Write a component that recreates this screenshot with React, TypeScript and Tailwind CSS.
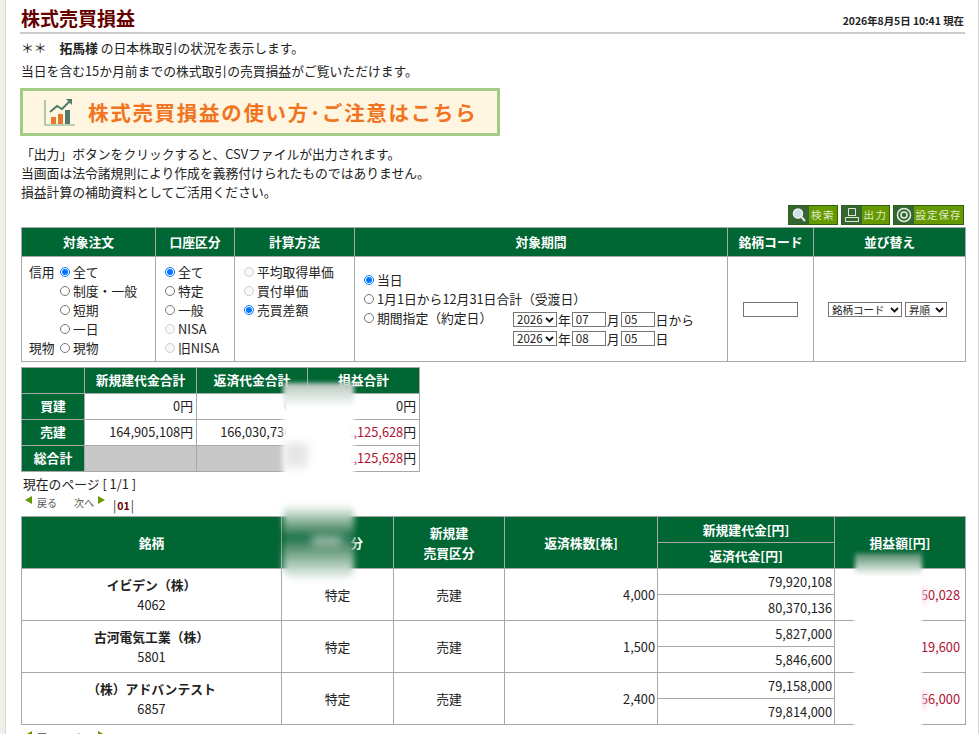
import React from "react";

const FONT = '"Noto Sans CJK JP", "Noto Sans", sans-serif';
const th = "border border-[#a8a8a8] bg-[#006633] text-white font-bold text-center p-0";
const td = "border border-[#a8a8a8] bg-white p-0";
const sumTh = `${th} pb-[2px]`;
const sumTd = `${td} text-right pr-[3px] pb-[2px]`;

function R({ on, off, label }: { on?: boolean; off?: boolean; label: React.ReactNode }) {
  return (
    <label className="flex items-center h-[19px] whitespace-nowrap">
      <input type="radio" readOnly checked={!!on} disabled={off} className="w-[10px] h-[10px] m-0 mr-[3px] shrink-0" />
      <span>{label}</span>
    </label>
  );
}

function Sel({ w, label, small }: { w: string; label: string; small?: boolean }) {
  return (
    <span className={`relative block shrink-0 ${w}`}>
      <select className={`block appearance-none border border-[#767676] w-full h-[15px] pl-[3px] pr-0 leading-[13px] ${small ? "text-[10.5px]" : "text-[11.5px]"}`}>
        <option>{label}</option>
      </select>
      <svg width="9" height="6" viewBox="0 0 9 6" className="absolute right-[3px] top-[5px] pointer-events-none">
        <path d="M1 1L4.5 4.5L8 1" fill="none" stroke="#111" strokeWidth="1.8" />
      </svg>
    </span>
  );
}

function Num({ v, w }: { v: string; w: string }) {
  return <input readOnly value={v} className={`border border-[#767676] h-[15px] ml-[1px] pl-[3px] text-[11.5px] leading-[13px] shrink-0 ${w}`} />;
}

function Btn({ w, icon, label, track }: { w: string; icon: React.ReactNode; label: string; track: string }) {
  return (
    <div className={`flex h-[20px] border border-[#2f5f12] bg-[#669900] ${w}`}>
      <div className="flex items-center justify-center bg-[#336633] h-full shrink-0 w-[20px]">{icon}</div>
      <div className={`flex-1 text-center text-[10.5px] leading-[18px] text-[#dfeccb] whitespace-nowrap ${track}`}>{label}</div>
    </div>
  );
}

function Nav() {
  return (
    <div className="flex items-start h-[22px] text-[10px] text-[#555] pl-[4px] whitespace-nowrap">
      <svg width="7" height="8" viewBox="0 0 7 8" className="mt-[2px] mr-[5px]"><path d="M7 0V8L0 4Z" fill="#669900" /></svg>
      <span className="leading-[16px] mt-[1px]">戻る</span>
      <span className="leading-[16px] ml-[17px] mt-[1px]">次へ</span>
      <svg width="7" height="8" viewBox="0 0 7 8" className="mt-[2px] ml-[4px]"><path d="M0 0V8L7 4Z" fill="#669900" /></svg>
      <span className="ml-[8px] mt-[3px] text-[12px] leading-[16px] text-[#333]">|<b className="text-[10.5px] text-[#660000] mx-[1px]">01</b>|</span>
    </div>
  );
}

function StockRow({ name, code, qty, a, b, pl }: { name: string; code: string; qty: string; a: string; b: string; pl: string }) {
  return (
    <>
      <tr className="h-[26px]">
        <td rowSpan={2} className={`${td} text-center`}>
          <div className="font-bold leading-[19px]">{name}</div>
          <div className="leading-[19px] mt-[1px]">{code}</div>
        </td>
        <td rowSpan={2} className={`${td} text-center`}>特定</td>
        <td rowSpan={2} className={`${td} text-center`}>売建</td>
        <td rowSpan={2} className={`${td} text-right pr-[2px]`}>{qty}</td>
        <td className={`${td} text-right pr-[2px]`}>{a}</td>
        <td rowSpan={2} className={`${td} text-right pr-[5px] text-[#b01030]`}>{pl}</td>
      </tr>
      <tr className="h-[26px]">
        <td className={`${td} text-right pr-[2px]`}>{b}</td>
      </tr>
    </>
  );
}

export default function App() {
  return (
    <div className="relative flex w-[980px] h-[734px] overflow-hidden bg-white text-[#222] text-[12.8px]" style={{ fontFamily: FONT }}>
      <div className="w-[6px] shrink-0 bg-[#f0efe9] border-r border-[#d8d8d2]" />
      <main className="w-[944px] ml-[15px] shrink-0">
        <header className="flex items-end justify-between h-[34px] -ml-px border-b-2 border-[#cccccc] pb-[1px] pl-[1px]">
          <h1 className="text-[19px] leading-[26px] font-bold text-[#660000]">株式売買損益</h1>
          <div className="text-[10.4px] font-bold leading-[14px] text-[#222] mb-[3px] mr-[1px]">2026年8月5日 10:41 現在</div>
        </header>
        <p className="leading-[19px] mt-[4px]">＊＊　<b>拓馬様</b> の日本株取引の状況を表示します。</p>
        <p className="leading-[19px] mt-[4px]">当日を含む15か月前までの株式取引の売買損益がご覧いただけます。</p>

        <div className="flex items-center w-[480px] h-[48px] mt-[8px] -ml-px border-[3px] border-[#a5cc84] bg-[#fff6e1]">
          <svg width="32" height="30" viewBox="0 0 32 30" className="ml-[21px]">
            <path d="M1 3V28H31" fill="none" stroke="#7fa88f" strokeWidth="1.2" />
            <rect x="7" y="20" width="5" height="7" fill="#e8762c" />
            <rect x="14" y="17" width="5" height="10" fill="#e8762c" />
            <rect x="21" y="13" width="5" height="14" fill="#4f7d69" />
            <path d="M6 15L13 9L18 12L26 4" fill="none" stroke="#4f7d69" strokeWidth="2" />
            <path d="M22 2H28V8Z" fill="#4f7d69" />
          </svg>
          <span className="ml-[12px] text-[20.5px] font-bold tracking-[1.7px] text-[#f07522] whitespace-nowrap">株式売買損益の使い方･ご注意はこちら</span>
        </div>

        <div className="mt-[8px] leading-[19px]">
          <p>「出力」ボタンをクリックすると、CSVファイルが出力されます。</p>
          <p>当画面は法令諸規則により作成を義務付けられたものではありません。</p>
          <p>損益計算の補助資料としてご活用ください。</p>
        </div>

        <div className="flex justify-end gap-[3px] mt-[4px] mr-px">
          <Btn w="w-[50px]" track="tracking-[1.6px]" label="検索" icon={
            <svg width="16" height="16" viewBox="0 0 16 16"><circle cx="7" cy="6.5" r="4.5" fill="#cfe0e8" stroke="#f2f2f2" strokeWidth="1.5" /><path d="M10.5 10L14 14" stroke="#e8e8e8" strokeWidth="2" /></svg>
          } />
          <Btn w="w-[49px]" track="tracking-[1.6px]" label="出力" icon={
            <svg width="16" height="16" viewBox="0 0 16 16" fill="none" stroke="#dfe8d8" strokeWidth="1"><path d="M4.5 1.5H11.5V8.5H4.5Z" /><path d="M1.5 10.5H14.5V14.5H1.5Z" /><path d="M4 8.5H12" /></svg>
          } />
          <Btn w="w-[71px]" track="tracking-[1px]" label="設定保存" icon={
            <svg width="16" height="16" viewBox="0 0 16 16" fill="none" stroke="#e8efe0"><circle cx="8" cy="8" r="6.5" strokeWidth="1.5" /><circle cx="8" cy="8" r="3" strokeWidth="1.5" /></svg>
          } />
        </div>

        <table className="table-fixed border-collapse w-[944px] mt-[2px]">
          <colgroup>
            <col className="w-[134px]" /><col className="w-[79px]" /><col className="w-[120px]" /><col className="w-[373px]" /><col className="w-[86px]" /><col className="w-[152px]" />
          </colgroup>
          <thead>
            <tr className="h-[29px]">
              {["対象注文", "口座区分", "計算方法", "対象期間", "銘柄コード", "並び替え"].map((t) => (
                <th key={t} className={th}>{t}</th>
              ))}
            </tr>
          </thead>
          <tbody>
            <tr className="h-[105px]">
              <td className={`${td} align-middle pt-[1px]`}>
                <div className="flex pl-[7px]">
                  <div className="w-[31px] leading-[19px] shrink-0">
                    <div className="h-[76px]">信用</div>
                    <div>現物</div>
                  </div>
                  <div>
                    <R on label="全て" />
                    <R label="制度・一般" />
                    <R label="短期" />
                    <R label="一日" />
                    <R label="現物" />
                  </div>
                </div>
              </td>
              <td className={`${td} align-middle pl-[9px] pt-[1px]`}>
                <R on label="全て" />
                <R label="特定" />
                <R label="一般" />
                <R off label="NISA" />
                <R off label="旧NISA" />
              </td>
              <td className={`${td} align-top pl-[9px] pt-[5px]`}>
                <R off label="平均取得単価" />
                <R off label="買付単価" />
                <R on label="売買差額" />
              </td>
              <td className={`${td} align-middle pl-[9px]`}>
                <R on label="当日" />
                <R label="1月1日から12月31日合計（受渡日）" />
                <div className="flex">
                  <div className="w-[149px] shrink-0"><R label="期間指定（約定日）" /></div>
                  <div className="leading-[19px]">
                    <div className="flex items-center h-[19px] mt-[1px]">
                      <Sel w="w-[44px]" label="2026" />
                      <span className="ml-px">年</span>
                      <Num v="07" w="w-[34px]" />
                      <span className="ml-px">月</span>
                      <Num v="05" w="w-[34px]" />
                      <span className="ml-px">日から</span>
                    </div>
                    <div className="flex items-center h-[19px]">
                      <Sel w="w-[44px]" label="2026" />
                      <span className="ml-px">年</span>
                      <Num v="08" w="w-[34px]" />
                      <span className="ml-px">月</span>
                      <Num v="05" w="w-[34px]" />
                      <span className="ml-px">日</span>
                    </div>
                  </div>
                </div>
              </td>
              <td className={`${td} text-center align-middle`}>
                <input readOnly className="border border-[#767676] w-[55px] h-[15px] block mx-auto" />
              </td>
              <td className={`${td} text-center align-middle pr-[4px]`}>
                <div className="flex justify-center gap-[3px]">
                  <Sel w="w-[74px]" label="銘柄コード" small />
                  <Sel w="w-[42px]" label="昇順" small />
                </div>
              </td>
            </tr>
          </tbody>
        </table>

        <table className="table-fixed border-collapse w-[398px] mt-[5px]">
          <colgroup><col className="w-[63px]" /><col className="w-[112px]" /><col className="w-[111px]" /><col className="w-[112px]" /></colgroup>
          <tbody>
            <tr className="h-[26px]"><th className={sumTh} /><th className={sumTh}>新規建代金合計</th><th className={sumTh}>返済代金合計</th><th className={sumTh}>損益合計</th></tr>
            <tr className="h-[26px]"><th className={sumTh}>買建</th><td className={sumTd}>0円</td><td className={sumTd}>0円</td><td className={sumTd}>0円</td></tr>
            <tr className="h-[26px]"><th className={sumTh}>売建</th><td className={sumTd}>164,905,108円</td><td className={sumTd}>166,030,736円</td><td className={sumTd}><span className="text-[#b01030]">-1,125,628</span>円</td></tr>
            <tr className="h-[26px]"><th className={sumTh}>総合計</th><td className="border border-[#a8a8a8] bg-[#c8c8c8]" /><td className="border border-[#a8a8a8] bg-[#c8c8c8]" /><td className={sumTd}><span className="text-[#b01030]">-1,125,628</span>円</td></tr>
          </tbody>
        </table>

        <p className="pl-[2px] leading-[19px] mt-[2px]">現在のページ [ 1/1 ]</p>
        <div className="mt-[1px]"><Nav /></div>

        <table className="table-fixed border-collapse w-[944px]">
          <colgroup><col className="w-[260px]" /><col className="w-[112px]" /><col className="w-[111px]" /><col className="w-[153px]" /><col className="w-[177px]" /><col className="w-[131px]" /></colgroup>
          <thead>
            <tr className="h-[26px]">
              <th rowSpan={2} className={th}>銘柄</th>
              <th rowSpan={2} className={th}>口座区分</th>
              <th rowSpan={2} className={`${th} leading-[20px]`}>新規建<br />売買区分</th>
              <th rowSpan={2} className={th}>返済株数[株]</th>
              <th className={th}>新規建代金[円]</th>
              <th rowSpan={2} className={th}>損益額[円]</th>
            </tr>
            <tr className="h-[26px]"><th className={th}>返済代金[円]</th></tr>
          </thead>
          <tbody>
            <StockRow name="イビデン（株）" code="4062" qty="4,000" a="79,920,108" b="80,370,136" pl="-450,028" />
            <StockRow name="古河電気工業（株）" code="5801" qty="1,500" a="5,827,000" b="5,846,600" pl="-19,600" />
            <StockRow name="（株）アドバンテスト" code="6857" qty="2,400" a="79,158,000" b="79,814,000" pl="-656,000" />
          </tbody>
        </table>
        <div className="mt-[4px]"><Nav /></div>
      </main>
      <div className="w-[1px] ml-auto mr-[1px] bg-[#d8d8d2]" />

      {/* redaction smudges lying over the tables */}
      <div className="absolute left-[283px] top-[383px] w-[71px] h-[131px] bg-linear-to-b from-[#b4c4bb] from-0% to-white to-18% rounded-t-[35px/22px] blur-[2px]" />
      <div className="absolute left-[284px] top-[443px] w-[24px] h-[24px] bg-[#e6e6e6] blur-[4px]" />
      <div className="absolute left-[283px] top-[505px] w-[71px] h-[76px] rounded-b-[14px] bg-linear-to-b from-white from-0% via-[#15724a] via-42% to-white to-100% blur-[3px]" />
      <div className="absolute left-[312px] top-[535px] w-[30px] h-[13px] bg-[#8fb09d] blur-[4px]" />
      <div className="absolute left-[919px] top-[586px] w-[6px] h-[18px] bg-[#f9d5dc] blur-[3px]" />
      <div className="absolute left-[919px] top-[691px] w-[6px] h-[18px] bg-[#f9d5dc] blur-[3px]" />
      <div className="absolute left-[855px] top-[553px] w-[67px] h-[32px] rounded-t-[33px/24px] bg-linear-to-b from-[#4e8a6a] from-0% to-white to-70% blur-[2px]" />
      <div className="absolute left-[854px] top-[580px] w-[68px] h-[165px] bg-white blur-[1px]" />
    </div>
  );
}
